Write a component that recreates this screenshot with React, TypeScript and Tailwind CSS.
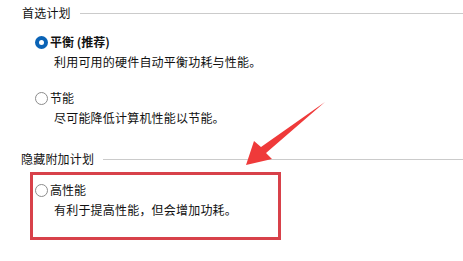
import React from 'react';

const font = { fontFamily: '"Noto Sans CJK SC", "Noto Sans", sans-serif' };

function Radio({ checked }: { checked?: boolean }) {
  if (checked) {
    return (
      <span className="flex h-[13px] w-[13px] shrink-0 items-center justify-center rounded-full bg-[#0a63b6]">
        <span className="h-[5px] w-[5px] rounded-full bg-white" />
      </span>
    );
  }
  return <span className="h-[13px] w-[13px] shrink-0 rounded-full border border-[#8c8c8c] bg-white" />;
}

function GroupHeader({ title }: { title: string }) {
  return (
    <div className="flex h-[16px] items-center">
      <span className="text-[12px] leading-[16px] tracking-[0.2px] text-[#111]">{title}</span>
      <div className="ml-[9px] h-px flex-1 bg-[#cbcbcb]" />
    </div>
  );
}

function Plan({ label, desc, checked, bold }: { label: string; desc: string; checked?: boolean; bold?: boolean }) {
  return (
    <div>
      <div className="flex h-[16px] items-center gap-[2px]">
        <Radio checked={checked} />
        <span className={`text-[12px] leading-[16px] text-[#111] ${bold ? 'font-bold' : ''}`}>{label}</span>
      </div>
      <div className="mt-[4px] pl-[19px] text-[12px] leading-[16px] tracking-[0.2px] text-[#111]">{desc}</div>
    </div>
  );
}

export default function App() {
  return (
    <div className="relative h-[261px] w-[463px] overflow-hidden bg-white" style={font}>
      <div className="flex flex-col pt-[5px]">
        <div className="pl-[22px]">
          <GroupHeader title="首选计划" />
        </div>
        <div className="mt-[13px] pl-[35px]">
          <Plan label="平衡 (推荐)" desc="利用可用的硬件自动平衡功耗与性能。" checked bold />
        </div>
        <div className="mt-[20px] pl-[35px]">
          <Plan label="节能" desc="尽可能降低计算机性能以节能。" />
        </div>
        <div className="mt-[25px] pl-[21px]">
          <GroupHeader title="隐藏附加计划" />
        </div>
        <div className="ml-[30px] mt-[5px] w-[251px] border-[3px] border-[#d8414a] pb-[19px] pl-[2px] pt-[7px]">
          <Plan label="高性能" desc="有利于提高性能，但会增加功耗。" />
        </div>
      </div>
      <svg className="absolute left-0 top-0" width="463" height="261" viewBox="0 0 463 261">
        <polygon
          points="246,165 254,141 261,147 325,102 266,153 272,159"
          fill="#ef3a3a"
        />
      </svg>
    </div>
  );
}
